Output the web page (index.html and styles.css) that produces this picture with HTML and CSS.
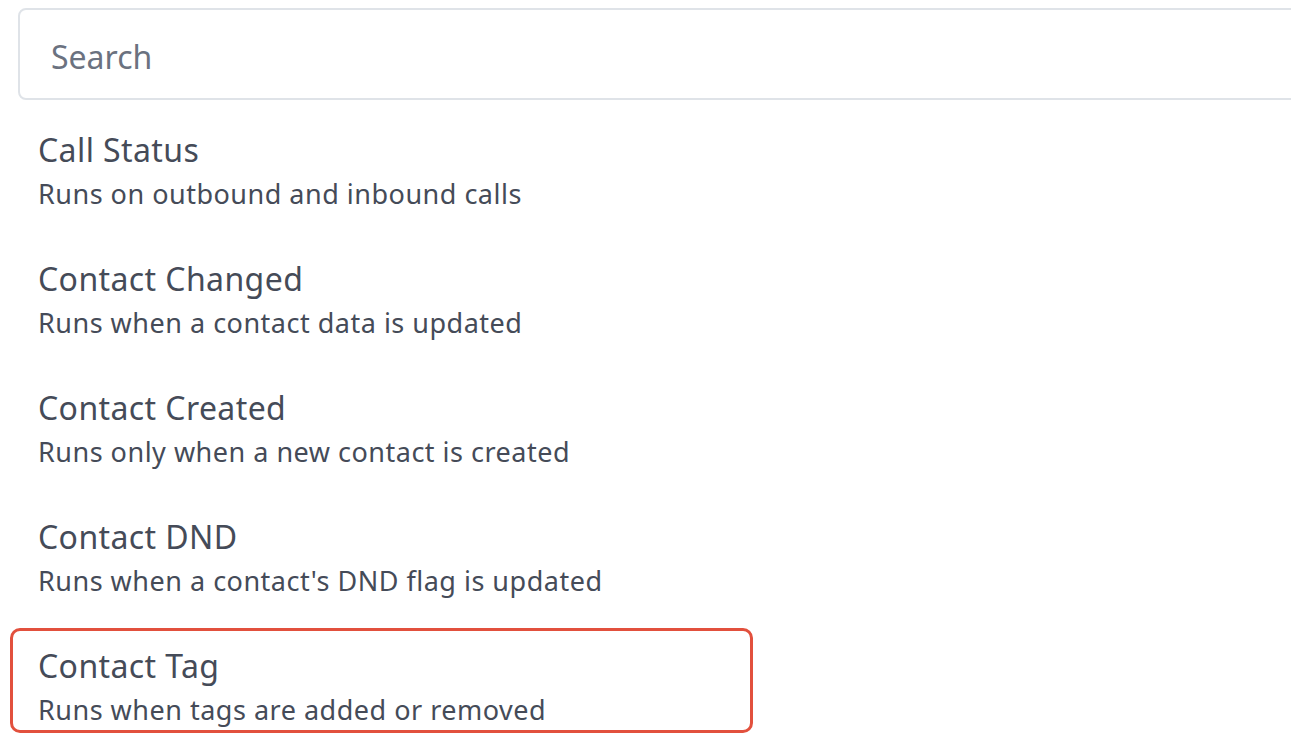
FILE: index.html
```html
<!DOCTYPE html>
<html lang="en">
<head>
<meta charset="utf-8">
<title>Triggers</title>
<link rel="stylesheet" href="styles.css">
</head>
<body>
<div class="page">
  <div class="search">
    <input class="search-input" type="text" placeholder="Search">
  </div>
  <ul class="trigger-list">
    <li class="trigger">
      <div class="trigger-title">Call Status</div>
      <div class="trigger-desc">Runs on outbound and inbound calls</div>
    </li>
    <li class="trigger">
      <div class="trigger-title">Contact Changed</div>
      <div class="trigger-desc">Runs when a contact data is updated</div>
    </li>
    <li class="trigger">
      <div class="trigger-title">Contact Created</div>
      <div class="trigger-desc">Runs only when a new contact is created</div>
    </li>
    <li class="trigger">
      <div class="trigger-title">Contact DND</div>
      <div class="trigger-desc">Runs when a contact's DND flag is updated</div>
    </li>
    <li class="trigger trigger-highlight">
      <div class="trigger-title">Contact Tag</div>
      <div class="trigger-desc">Runs when tags are added or removed</div>
    </li>
  </ul>
</div>
</body>
</html>
```

FILE: styles.css
```css
* { box-sizing: border-box; }
html, body {
  margin: 0;
  padding: 0;
  background: #ffffff;
  overflow: hidden;
}
body {
  font-family: "Noto Sans", "Open Sans", sans-serif;
  color: #454b58;
}
.page {
  width: 1291px;
  height: 746px;
  overflow: hidden;
}
.search {
  padding: 8px 0 0 18px;
}
.search-input {
  display: block;
  width: 1300px;
  height: 92px;
  border: 2px solid #dfe3e8;
  border-radius: 8px;
  padding: 4px 0 0 31px;
  font-family: inherit;
  font-size: 32px;
  color: #454b58;
  background: #fff;
  outline: none;
}
.search-input::placeholder {
  color: #6b7280;
}
.trigger-list {
  list-style: none;
  margin: 12px 0 0 10px;
  padding: 0;
  display: flex;
  flex-direction: column;
  gap: 24px;
}
.trigger {
  width: 743px;
  height: 105px;
  border: 3px solid transparent;
  border-radius: 10px;
  padding: 14px 0 0 25px;
}
.trigger-highlight {
  border-color: #e2503d;
}
.trigger-title {
  font-size: 32px;
  line-height: 42px;
  letter-spacing: 0.4px;
  color: #454b58;
  white-space: nowrap;
}
.trigger-desc {
  margin-top: 6px;
  font-size: 27px;
  line-height: 34px;
  letter-spacing: 0.5px;
  color: #454b58;
  white-space: nowrap;
}
```
